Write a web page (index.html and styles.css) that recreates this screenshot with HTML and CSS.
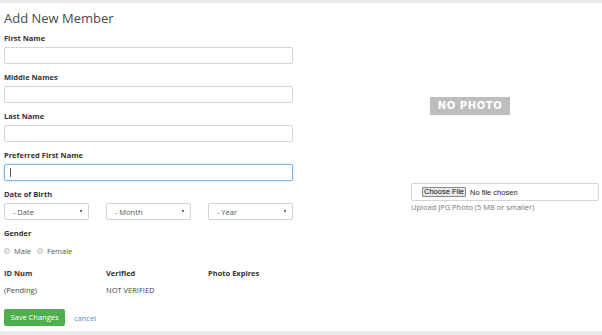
FILE: index.html
```html
<!DOCTYPE html>
<html lang="en">
<head>
<meta charset="utf-8">
<title>Add New Member</title>
<link rel="stylesheet" href="styles.css">
</head>
<body>
<div class="topbar"></div>
<main class="page">
  <h1 class="title">Add New Member</h1>
  <div class="layout">
    <form class="form">
      <div class="group">
        <label class="label">First Name</label>
        <div class="input"></div>
      </div>
      <div class="group">
        <label class="label">Middle Names</label>
        <div class="input"></div>
      </div>
      <div class="group">
        <label class="label">Last Name</label>
        <div class="input"></div>
      </div>
      <div class="group">
        <label class="label">Preferred First Name</label>
        <div class="input focused"><span class="caret"></span></div>
      </div>
      <div class="group">
        <label class="label">Date of Birth</label>
        <div class="cols">
          <div class="select"><span>- Date</span><span class="arrow"></span></div>
          <div class="select"><span>- Month</span><span class="arrow"></span></div>
          <div class="select"><span>- Year</span><span class="arrow"></span></div>
        </div>
      </div>
      <div class="group gender">
        <label class="label">Gender</label>
        <div class="radios">
          <span class="radio"></span><span class="radio-text">Male</span>
          <span class="radio"></span><span class="radio-text">Female</span>
        </div>
      </div>
      <div class="cols info-head">
        <span>ID Num</span>
        <span>Verified</span>
        <span>Photo Expires</span>
      </div>
      <div class="cols info-vals">
        <span>(Pending)</span>
        <span>NOT VERIFIED</span>
        <span></span>
      </div>
      <div class="actions">
        <span class="btn-save">Save Changes</span>
        <a class="cancel">cancel</a>
      </div>
    </form>
    <aside class="photo">
      <div class="nophoto">NO PHOTO</div>
      <div class="file">
        <span class="choose">Choose File</span>
        <span class="chosen">No file chosen</span>
      </div>
      <div class="help">Upload JPG Photo (5 MB or smaller)</div>
    </aside>
  </div>
</main>
<div class="bottombar"></div>
</body>
</html>
```
FILE: styles.css
```css
html, body {
  margin: 0;
  padding: 0;
  background: #fff;
}
body {
  width: 602px;
  height: 335px;
  overflow: hidden;
  font-family: "Open Sans", "Liberation Sans", sans-serif;
  color: #333;
  font-size: 8px;
}
.topbar {
  height: 3px;
  background: #ebebeb;
}
.page {
  padding: 0 3px 0 4px;
}
.title {
  margin: 5px 0 0;
  font-size: 13px;
  line-height: 20px;
  font-weight: 400;
  color: #4a4a4a;
}
.layout {
  margin-top: 5px;
  display: grid;
  grid-template-columns: 289px 188px;
  column-gap: 118px;
}
.group {
  margin-bottom: 8px;
}
.label {
  display: block;
  font-weight: 700;
  font-size: 7.5px;
  line-height: 11px;
  margin-bottom: 3px;
  color: #333;
}
.input {
  box-sizing: border-box;
  height: 17px;
  border: 1px solid #d4d4d4;
  border-radius: 2px;
  background: #fff;
  display: flex;
  align-items: center;
  padding-left: 5px;
}
.input.focused {
  border-color: #7fb5e0;
  box-shadow: 0 0 2px rgba(102, 175, 233, 0.5);
}
.caret {
  width: 1px;
  height: 9px;
  background: #555;
}
.cols {
  display: grid;
  grid-template-columns: repeat(3, 85px);
  column-gap: 17px;
}
.select {
  box-sizing: border-box;
  height: 17px;
  border: 1px solid #d4d4d4;
  border-radius: 2px;
  display: flex;
  align-items: center;
  justify-content: space-between;
  padding: 0 6px 0 8px;
  color: #555;
  font-size: 7.5px;
}
.arrow {
  width: 0;
  height: 0;
  border-left: 1.5px solid transparent;
  border-right: 1.5px solid transparent;
  border-top: 3px solid #333;
}
.gender {
  margin-bottom: 0;
}
.radios {
  height: 18px;
  display: flex;
  align-items: center;
  color: #555;
  font-size: 7.5px;
}
.radio {
  box-sizing: border-box;
  width: 6px;
  height: 6px;
  border-radius: 50%;
  border: 1px solid #c4c4c4;
  background: #ececec;
  margin-right: 4px;
}
.radio-text {
  margin-right: 6px;
}
.info-head {
  margin-top: 8px;
  line-height: 11px;
  font-weight: 700;
  font-size: 7.5px;
}
.info-vals {
  margin-top: 6px;
  line-height: 11px;
  font-size: 7.5px;
  color: #444;
}
.actions {
  margin-top: 13px;
  display: flex;
  align-items: center;
}
.btn-save {
  box-sizing: border-box;
  width: 61px;
  height: 17px;
  line-height: 17px;
  text-align: center;
  background: #4faf4f;
  border-radius: 2px;
  color: #fff;
  font-size: 7.5px;
}
.cancel {
  margin-left: 9px;
  color: #5b8dc0;
  font-size: 7.5px;
}
.photo {
  display: flex;
  flex-direction: column;
  align-items: flex-start;
}
.nophoto {
  margin-top: 64px;
  margin-left: 19px;
  width: 80px;
  height: 18px;
  line-height: 18px;
  background: #bdbdbd;
  color: #fff;
  font-family: "DejaVu Sans", "Liberation Sans", sans-serif;
  font-weight: 700;
  font-size: 10px;
  letter-spacing: 0.6px;
  text-align: center;
}
.file {
  box-sizing: border-box;
  margin-top: 68px;
  width: 188px;
  height: 18px;
  border: 1px solid #d4d4d4;
  border-radius: 2px;
  display: flex;
  align-items: center;
  padding-left: 10px;
  font-family: "Liberation Sans", Arial, sans-serif;
  font-size: 7.5px;
}
.choose {
  box-sizing: border-box;
  height: 10px;
  line-height: 8px;
  padding: 0 1px;
  border: 1px solid #8a8a8a;
  border-radius: 1px;
  background: #e6e6e6;
  color: #111;
}
.chosen {
  margin-left: 4px;
  color: #222;
}
.help {
  margin-top: 1px;
  line-height: 11px;
  font-size: 7.5px;
  color: #777;
}
.bottombar {
  position: absolute;
  left: 0;
  right: 0;
  bottom: 0;
  height: 4px;
  background: #ebebeb;
}
```
